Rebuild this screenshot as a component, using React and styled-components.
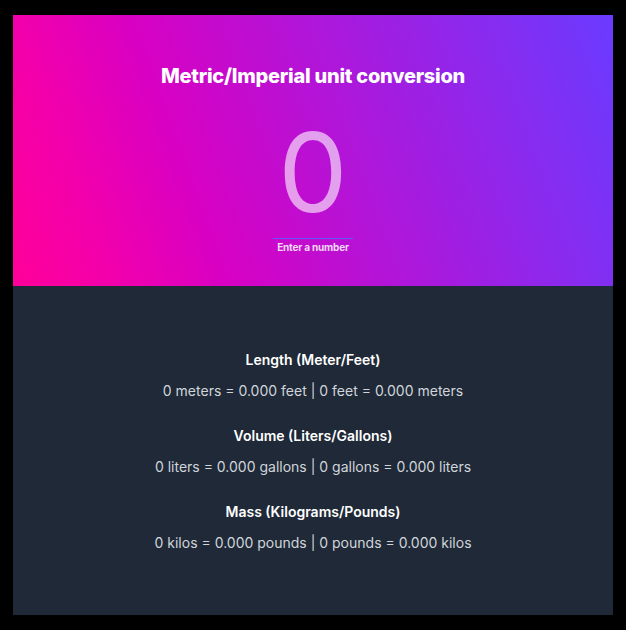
import React, { useState } from "react";
import styled, { createGlobalStyle } from "styled-components";

const GlobalStyle = createGlobalStyle`
  html, body {
    margin: 0;
    padding: 0;
    background: #000000;
    font-family: Inter, "Noto Sans", sans-serif;
  }
  * { box-sizing: border-box; }
`;

const Page = styled.div`
  padding: 15px 13px;
`;

const Card = styled.main`
  width: 600px;
  margin: 0 auto;
  display: flex;
  flex-direction: column;
`;

const Hero = styled.section`
  height: 271px;
  padding-top: 49px;
  display: flex;
  flex-direction: column;
  align-items: center;
  background: linear-gradient(
    70deg,
    #ff0099 0%,
    #f300ab 14%,
    #d900c2 30%,
    #6a3bff 100%
  );
`;

const Title = styled.h1`
  margin: 0;
  font-size: 20px;
  line-height: 24px;
  font-weight: 800;
  letter-spacing: -0.25px;
  color: #ffffff;
`;

const NumberInput = styled.input`
  margin-top: 28px;
  width: 80px;
  height: 123px;
  padding: 0 0 10px;
  border: none;
  border-bottom: 1px solid #6356ff;
  background: transparent;
  outline: none;
  text-align: center;
  font-family: Inter, "Noto Sans", sans-serif;
  font-size: 110px;
  line-height: 112px;
  font-weight: 400;
  color: rgba(255, 255, 255, 0.6);
`;

const Hint = styled.label`
  margin-top: 2px;
  font-size: 10px;
  line-height: 12px;
  font-weight: 700;
  letter-spacing: -0.2px;
  color: rgba(255, 255, 255, 0.85);
`;

const Results = styled.section`
  height: 329px;
  padding-top: 64px;
  display: flex;
  flex-direction: column;
  align-items: center;
  gap: 25px;
  background: #1f2937;
`;

const Group = styled.div`
  display: flex;
  flex-direction: column;
  align-items: center;
  gap: 11px;
`;

const GroupTitle = styled.h2`
  margin: 0;
  font-size: 14px;
  line-height: 20px;
  font-weight: 600;
  color: #ffffff;
`;

const GroupText = styled.p`
  margin: 0;
  font-size: 14px;
  line-height: 20px;
  font-weight: 400;
  color: #d1d5db;
`;

const conversions = [
  { title: "Length (Meter/Feet)", a: "meters", b: "feet", factor: 3.281 },
  { title: "Volume (Liters/Gallons)", a: "liters", b: "gallons", factor: 0.264 },
  { title: "Mass (Kilograms/Pounds)", a: "kilos", b: "pounds", factor: 2.204 },
];

export default function App() {
  const [value, setValue] = useState("0");
  const n = Number(value) || 0;

  return (
    <>
      <GlobalStyle />
      <Page>
        <Card>
          <Hero>
            <Title>Metric/Imperial unit conversion</Title>
            <NumberInput
              id="num"
              type="text"
              value={value}
              onChange={(e) => setValue(e.target.value)}
            />
            <Hint htmlFor="num">Enter a number</Hint>
          </Hero>
          <Results>
            {conversions.map((c) => (
              <Group key={c.title}>
                <GroupTitle>{c.title}</GroupTitle>
                <GroupText>
                  {n} {c.a} = {(n * c.factor).toFixed(3)} {c.b} | {n} {c.b} ={" "}
                  {(n / c.factor).toFixed(3)} {c.a}
                </GroupText>
              </Group>
            ))}
          </Results>
        </Card>
      </Page>
    </>
  );
}
